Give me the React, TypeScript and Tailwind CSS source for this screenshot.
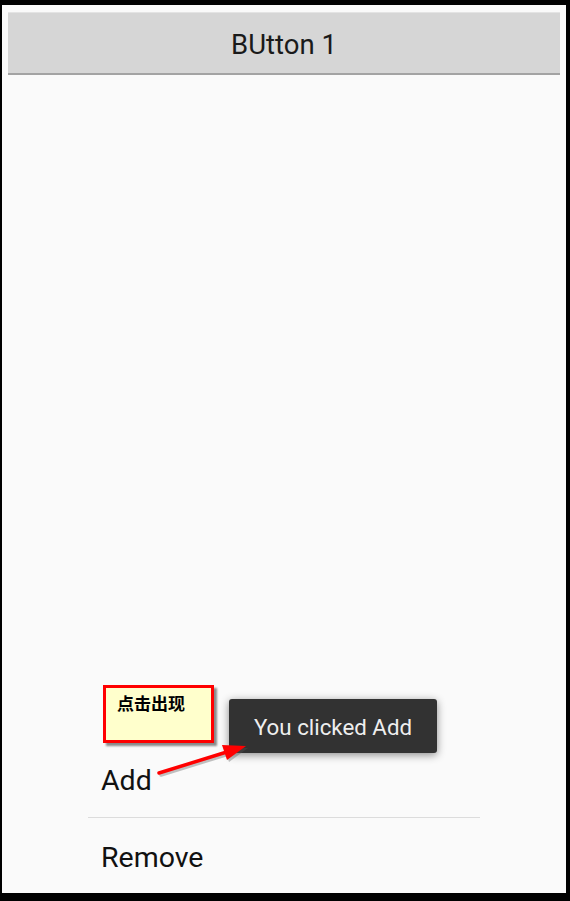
import React from "react";

const font = { fontFamily: "Roboto, 'Noto Sans', sans-serif" };

function Arrow() {
  return (
    <svg
      className="absolute left-[150px] top-[735px]"
      width="110"
      height="50"
      viewBox="0 0 110 50"
    >
      <g opacity="0.35" transform="translate(2,2)">
        <line x1="9" y1="38" x2="80" y2="16" stroke="#555" strokeWidth="3.5" strokeLinecap="round" />
        <polygon points="96,11 77,25 72,10" fill="#555" />
      </g>
      <line x1="9" y1="38" x2="80" y2="16" stroke="#ff0000" strokeWidth="3.5" strokeLinecap="round" />
      <polygon points="96,11 77,25 72,10" fill="#ff0000" />
    </svg>
  );
}

export default function App() {
  return (
    <div
      className="relative w-[570px] h-[901px] bg-black pt-[5px] pl-[2px] pr-[4px] pb-[8px]"
      style={font}
    >
      <div className="flex flex-col h-full bg-[#fafafa]">
        <button className="mt-[7px] mx-[6px] h-[63px] pt-[4px] bg-[#d6d6d6] border-t border-[#e4e4e4] border-b-2 border-b-[#a3a3a3] text-[27.5px] text-[#1a1a1a] flex items-center justify-center">
          BUtton 1
        </button>
        <div className="flex-1" />
        <div className="ml-[86px] w-[392px] flex flex-col text-[28.5px] text-[#111]">
          <div className="h-[75px] flex items-center pl-[13px] pt-[4px]">Add</div>
          <div className="h-px bg-[#dcdcdc]" />
          <div className="h-[75px] flex items-center pl-[13px] pt-[5px]">Remove</div>
        </div>
      </div>

      <div className="absolute left-[103px] top-[685px] w-[111px] h-[58px] border-[3px] border-[#ff0000] bg-[#ffffcc] shadow-[3px_3px_2px_rgba(0,0,0,0.45)] pl-[11px] pt-[5px]">
        <span
          className="text-[17px] font-bold text-black leading-none"
          style={{ fontFamily: "'Noto Sans CJK SC', sans-serif" }}
        >
          点击出现
        </span>
      </div>

      <div className="absolute left-[229px] top-[699px] w-[208px] h-[54px] pt-[3px] rounded-[3px] bg-[#323232] shadow-[0_2px_8px_rgba(0,0,0,0.45)] flex items-center justify-center text-[22.3px] text-[#eeeeee]">
        You clicked Add
      </div>

      <Arrow />
    </div>
  );
}
